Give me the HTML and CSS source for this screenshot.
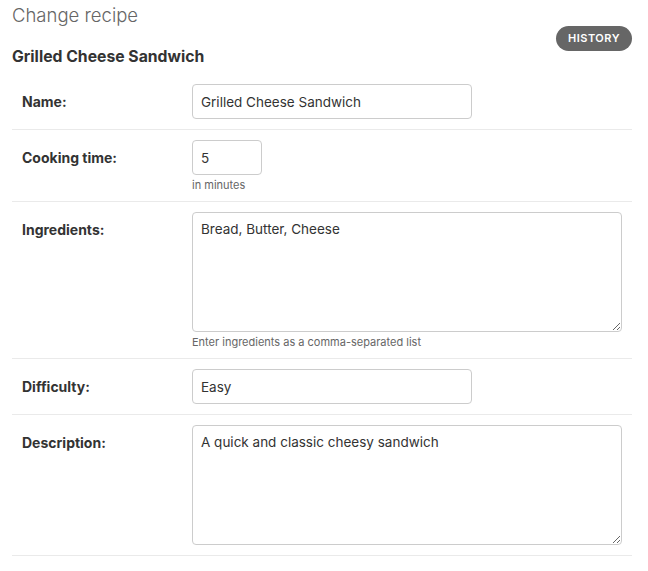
FILE: index.html
```html
<!DOCTYPE html>
<html lang="en">
<head>
<meta charset="utf-8">
<title>Change recipe</title>
<link rel="stylesheet" href="styles.css">
</head>
<body>
<div class="content">
  <div class="header">
    <div class="titles">
      <h1 class="page-title">Change recipe</h1>
      <h2 class="object-title">Grilled Cheese Sandwich</h2>
    </div>
    <div class="object-tools">
      <a class="history-link" href="#">History</a>
    </div>
  </div>
  <form class="change-form">
    <div class="form-row">
      <label class="field-label" for="id_name">Name:</label>
      <div class="field-box">
        <input class="text-input input-medium" id="id_name" type="text" value="Grilled Cheese Sandwich">
      </div>
    </div>
    <div class="form-row">
      <label class="field-label" for="id_time">Cooking time:</label>
      <div class="field-box">
        <input class="text-input input-small" id="id_time" type="text" value="5">
        <div class="help">in minutes</div>
      </div>
    </div>
    <div class="form-row">
      <label class="field-label" for="id_ingredients">Ingredients:</label>
      <div class="field-box">
        <textarea class="text-area" id="id_ingredients">Bread, Butter, Cheese</textarea>
        <div class="help">Enter ingredients as a comma-separated list</div>
      </div>
    </div>
    <div class="form-row">
      <label class="field-label" for="id_difficulty">Difficulty:</label>
      <div class="field-box">
        <input class="text-input input-medium" id="id_difficulty" type="text" value="Easy">
      </div>
    </div>
    <div class="form-row">
      <label class="field-label" for="id_description">Description:</label>
      <div class="field-box">
        <textarea class="text-area" id="id_description">A quick and classic cheesy sandwich</textarea>
      </div>
    </div>
  </form>
</div>
</body>
</html>
```

FILE: styles.css
```css
* {
  box-sizing: border-box;
}

html, body {
  margin: 0;
  padding: 0;
  background: #fff;
}

body {
  font-family: Inter, "Liberation Sans", Arial, sans-serif;
  color: #333;
  font-size: 14px;
}

.content {
  width: 620px;
  margin-left: 12px;
}

.header {
  display: flex;
  justify-content: space-between;
  align-items: flex-start;
}

.page-title {
  margin: 3px 0 0 0;
  font-size: 18.5px;
  line-height: 24px;
  font-weight: 300;
  color: #666;
}

.object-title {
  margin: 20px 0 0 0;
  font-size: 15.75px;
  line-height: 20px;
  font-weight: 700;
  color: #333;
}

.object-tools {
  padding-top: 26px;
}

.history-link {
  display: block;
  height: 25px;
  line-height: 25px;
  padding: 0 12px;
  border-radius: 13px;
  background: #666;
  color: #fff;
  font-size: 11px;
  font-weight: 600;
  letter-spacing: 0.5px;
  text-transform: uppercase;
  text-decoration: none;
}

.change-form {
  margin-top: 7px;
}

.form-row {
  display: flex;
  padding: 10px;
  border-bottom: 1px solid #eaeaea;
}

.field-label {
  flex: 0 0 170px;
  padding: 9px 10px 0 0;
  line-height: 18px;
  font-size: 14px;
  font-weight: 700;
  color: #333;
}

.field-box {
  display: flex;
  flex-direction: column;
  align-items: flex-start;
}

.text-input,
.text-area {
  font-family: Inter, "Liberation Sans", Arial, sans-serif;
  font-size: 13.5px;
  line-height: 17px;
  color: #333;
  border: 1px solid #ccc;
  border-radius: 4px;
  padding: 8px;
  margin: 0;
  background: #fff;
  outline: none;
}

.text-input {
  height: 35px;
}

.input-medium {
  width: 280px;
}

.input-small {
  width: 70px;
}

.text-area {
  width: 430px;
  height: 120px;
  resize: both;
  display: block;
}

.help {
  margin-top: 4px;
  font-size: 11px;
  line-height: 12px;
  color: #666;
}
```
